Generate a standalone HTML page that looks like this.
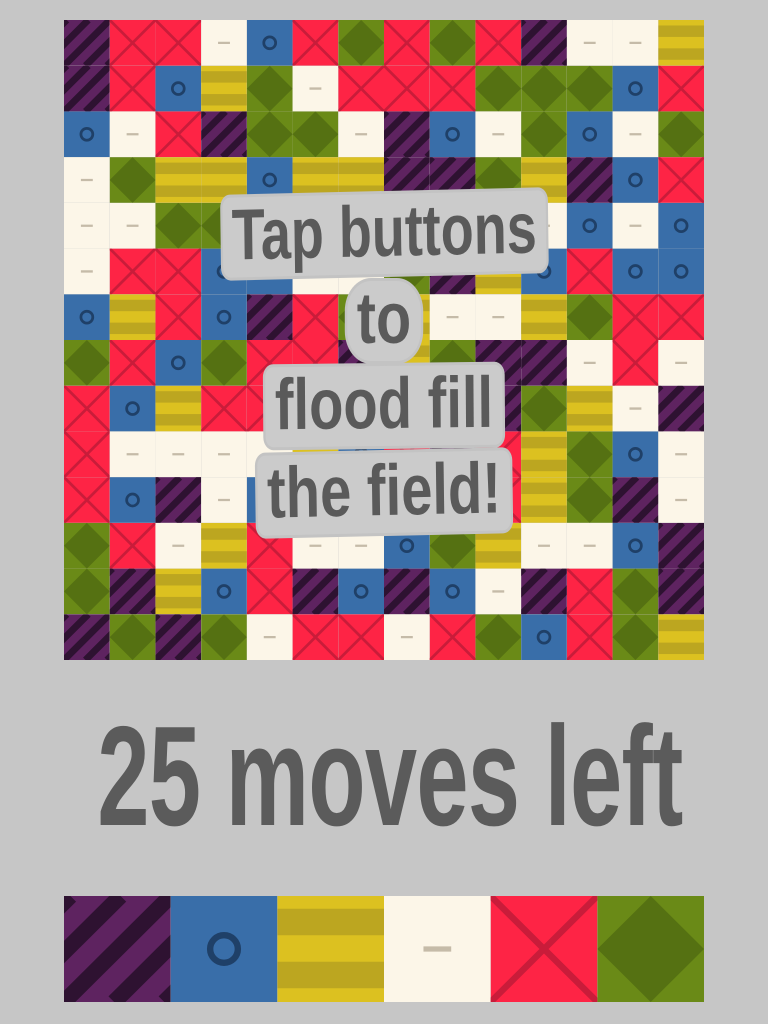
<!DOCTYPE html>
<html><head><meta charset="utf-8"><style>
html,body{margin:0;padding:0}
body{width:768px;height:1024px;background:#c6c6c6;position:relative;overflow:hidden;font-family:"Liberation Sans Narrow","Liberation Sans",sans-serif}
svg{position:absolute;display:block}
.lbl{position:absolute;left:0;width:768px;text-align:center;font-weight:bold;color:#5a5a5a;font-size:72px;line-height:1;white-space:nowrap}
.lbl span{display:inline-block;background:#cbcbcb;padding:2px 12px 6px;border-radius:10px;box-shadow:0 0 0 3px #c3c3c3}
.moves{position:absolute;left:-110px;width:1000px;top:706px;text-align:center;font-weight:bold;color:#5b5b5b;font-size:142px;line-height:1;transform:scaleX(0.66);transform-origin:500px 0;white-space:nowrap;letter-spacing:-1px}
</style></head><body>
<svg width="0" height="0" style="position:absolute">
<defs>
<clipPath id="c"><rect width="100" height="100"/></clipPath>
<symbol id="P" viewBox="0 0 100 100"><rect width="100" height="100" fill="#5e2360"/><g clip-path="url(#c)" stroke="#2e1231" stroke-width="15"><path d="M-141 100L-41 0M-94 100L6 0M-47 100L53 0M0 100L100 0M47 100L147 0M94 100L194 0"/></g></symbol>
<symbol id="B" viewBox="0 0 100 100"><rect width="100" height="100" fill="#396ea9"/><circle cx="50" cy="50" r="13" fill="none" stroke="#1f4068" stroke-width="6"/></symbol>
<symbol id="Y" viewBox="0 0 100 100"><rect width="100" height="100" fill="#dcc120"/><rect y="12" width="100" height="25" fill="#bca620"/><rect y="62" width="100" height="25" fill="#bca620"/></symbol>
<symbol id="W" viewBox="0 0 100 100"><rect width="100" height="100" fill="#fcf6e8"/><path d="M37 50H63" stroke="#c5bba8" stroke-width="5"/></symbol>
<symbol id="R" viewBox="0 0 100 100"><rect width="100" height="100" fill="#fe2445"/><path d="M0 0L100 100M100 0L0 100" stroke="#c91c3a" stroke-width="6"/></symbol>
<symbol id="G" viewBox="0 0 100 100"><rect width="100" height="100" fill="#6a8a17"/><path d="M50 0L100 50L50 100L0 50Z" fill="#557112"/></symbol>
</defs></svg>

<svg id="grid" style="left:64px;top:20px" width="640" height="640" viewBox="0 0 1400 1400"></svg>
<svg style="left:64px;top:896px" width="640" height="106" viewBox="0 0 600 100" preserveAspectRatio="none">
<use href="#P" x="0" y="0" width="100" height="100"/>
<use href="#B" x="100" y="0" width="100" height="100"/>
<use href="#Y" x="200" y="0" width="100" height="100"/>
<use href="#W" x="300" y="0" width="100" height="100"/>
<use href="#R" x="400" y="0" width="100" height="100"/>
<use href="#G" x="500" y="0" width="100" height="100"/>
</svg>

<div class="lbl" style="top:194px"><span style="transform:scaleX(0.75) rotate(-1deg)">Tap buttons</span></div>
<div class="lbl" style="top:281px"><span style="transform:scaleX(0.8);border-radius:30px">to</span></div>
<div class="lbl" style="top:366px"><span style="transform:scaleX(0.78) rotate(-0.5deg)">flood fill</span></div>
<div class="lbl" style="top:453px"><span style="transform:scaleX(0.78) rotate(-1deg)">the field!</span></div>

<div class="moves">25 moves left</div>

<script>
var rows=["PRRWBRGRGRPWWY","PRBYGWRRRGGGBR","BWRPGGWPBWGBWG","WGYYBYYPPGYPBR","WWGGYYBPPWWBWB","WRRBBWWGPYBRBB","BYRBPRGYWWYGRR","GRBGRRPYGPPWRW","RBYRRRPPPPGYWP","RWWWWYBRPRYGBW","RBPWBRRRRRYGPW","GRWYRWWBGYWWBP","GPYBRPBPBWPRGP","PGPGWRRWRGBRGY"];
var s="";for(var r=0;r<14;r++)for(var c=0;c<14;c++)s+='<use href="#'+rows[r][c]+'" x="'+c*100+'" y="'+r*100+'" width="100" height="100"/>';
document.getElementById("grid").innerHTML=s;
</script>
</body></html>
